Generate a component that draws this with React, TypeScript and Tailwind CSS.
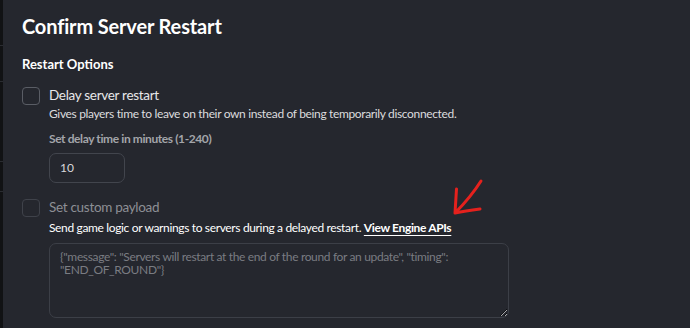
import React from "react";

function Checkbox({ dim }: { dim?: boolean }) {
  return (
    <div
      className={`mt-[1px] h-[18px] w-[18px] shrink-0 rounded-[4px] border ${dim ? "border-[#3f424a]" : "border-[#5a5d65]"}`}
    />
  );
}

function RedArrow() {
  return (
    <svg className="absolute left-[448px] top-[176px]" width="40" height="44" viewBox="0 0 40 44" fill="none">
      <path
        d="M33 5 C26 16 16 28 7 37 M7 37 C7.5 30 8 22 8.5 13 M7 37 C14 35.5 24 34 32 33"
        stroke="#e5211d"
        strokeWidth="3"
        strokeLinecap="round"
        strokeLinejoin="round"
      />
    </svg>
  );
}

export default function App() {
  return (
    <div className="relative flex h-[328px] w-[690px] overflow-hidden bg-[#25272e] font-['Lato',sans-serif] text-[#f2f2f3]">
      {/* edge of the page behind the dialog */}
      <div className="flex w-[3px] shrink-0 flex-col bg-[#111214]">
        <div className="h-[46px] border-b border-[#2a2c31]" />
        <div className="h-[36px] border-b border-[#2a2c31]" />
        <div className="h-[80px] border-b border-[#2a2c31]" />
        <div className="h-[30px] border-b border-[#2a2c31]" />
      </div>

      <div className="flex-1 pl-[19px] pt-[12px]">
        <h1 className="text-[20px] font-bold leading-[28px] tracking-[-0.15px] text-white">Confirm Server Restart</h1>

        <h2 className="mt-[15px] text-[13px] font-bold leading-[18px] text-white">Restart Options</h2>

        <div className="mt-[13px] flex gap-[9px]">
          <Checkbox />
          <div className="flex flex-col">
            <span className="text-[13.5px] leading-[19px] tracking-[-0.3px] text-[#e8e8ea]">Delay server restart</span>
            <span className="mt-[1px] text-[12px] leading-[16px] tracking-[-0.35px] text-[#dcdcde]">
              Gives players time to leave on their own instead of being temporarily disconnected.
            </span>
            <span className="mt-[9px] text-[12px] font-bold leading-[16px] tracking-[-0.4px] text-[#a3a5aa]">
              Set delay time in minutes (1-240)
            </span>
            <div className="mt-[6px] flex h-[30px] w-[76px] items-center rounded-[7px] border border-[#42454d] px-[10px] text-[12px] text-[#d8d8da]">
              10
            </div>
          </div>
        </div>

        <div className="mt-[15px] flex gap-[9px]">
          <Checkbox dim />
          <div className="flex flex-col">
            <span className="text-[13.5px] leading-[19px] tracking-[-0.3px] text-[#8d8f95]">Set custom payload</span>
            <span className="mt-[3px] text-[12px] leading-[16px] tracking-[-0.35px] text-white">
              Send game logic or warnings to servers during a delayed restart.{" "}
              <a className="font-bold underline underline-offset-[3px]">View Engine APIs</a>
            </span>
            <textarea
              className="mt-[7px] h-[75px] w-[460px] rounded-[7px] border border-[#3c3f47] bg-transparent px-[10px] py-[6px] text-[12px] leading-[13px] tracking-[-0.35px] [color-scheme:dark] placeholder:text-[#7a7c82]"
              placeholder={'{"message": "Servers will restart at the end of the round for an update", "timing": "END_OF_ROUND"}'}
            />
          </div>
        </div>
      </div>

      <RedArrow />
    </div>
  );
}
